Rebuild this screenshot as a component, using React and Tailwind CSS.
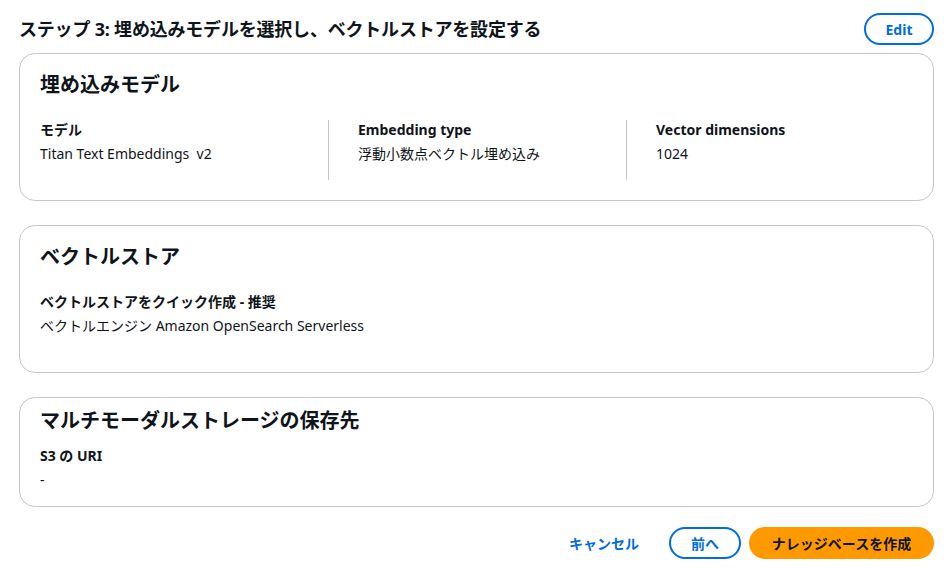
const font = { fontFamily: '"Noto Sans", "Noto Sans CJK JP", sans-serif' };

function Card({ title, className = "", children }) {
  return (
    <section
      className={`rounded-2xl border border-[#c6c6cd] bg-white px-5 ${className}`}
    >
      <h3 className="text-[20px] font-bold leading-[30px] text-[#0f141a]">
        {title}
      </h3>
      {children}
    </section>
  );
}

function Field({ label, value }) {
  return (
    <div>
      <div className="text-[14px] font-bold leading-5 text-[#0f141a]">
        {label}
      </div>
      <div className="mt-1 whitespace-pre text-[14px] leading-5 text-[#0f141a]">
        {value}
      </div>
    </div>
  );
}

export default function App() {
  return (
    <div
      className="min-h-[573px] w-[951px] bg-white pl-[19px] pr-[17px] pt-[13px]"
      style={font}
    >
      <div className="flex items-center justify-between">
        <h2 className="text-[18px] font-bold leading-8 tracking-[-0.2px] text-[#0f141a]">
          ステップ 3: 埋め込みモデルを選択し、ベクトルストアを設定する
        </h2>
        <button className="h-[32px] w-[70px] rounded-full border-2 border-[#006ce0] text-[14px] font-bold text-[#006ce0]">
          Edit
        </button>
      </div>

      <Card title="埋め込みモデル" className="mt-2 pt-4 pb-5">
        <div className="mt-5 grid grid-cols-[288px_298px_1fr]">
          <div className="pr-5">
            <Field label="モデル" value="Titan Text Embeddings  v2" />
          </div>
          <div className="border-l border-[#c6c6cd] pl-[29px] pr-5 pb-4">
            <Field label="Embedding type" value="浮動小数点ベクトル埋め込み" />
          </div>
          <div className="border-l border-[#c6c6cd] pl-[29px] pr-5 pb-4">
            <Field label="Vector dimensions" value="1024" />
          </div>
        </div>
      </Card>

      <Card title="ベクトルストア" className="mt-6 pt-4 pb-9">
        <div className="mt-5">
          <Field
            label="ベクトルストアをクイック作成 - 推奨"
            value="ベクトルエンジン Amazon OpenSearch Serverless"
          />
        </div>
      </Card>

      <Card title="マルチモーダルストレージの保存先" className="mt-6 pt-2 pb-4">
        <div className="mt-[10px]">
          <Field label="S3 の URI" value="-" />
        </div>
      </Card>

      <div className="mt-5 flex items-center justify-end">
        <button className="mr-[30px] text-[14px] font-bold text-[#006ce0]">
          キャンセル
        </button>
        <button className="h-[32px] w-[72px] rounded-full border-2 border-[#006ce0] text-[14px] font-bold text-[#006ce0]">
          前へ
        </button>
        <button className="ml-[8px] h-[32px] w-[185px] rounded-full bg-[#ff9900] text-[14px] font-bold text-[#0f141a]">
          ナレッジベースを作成
        </button>
      </div>
    </div>
  );
}
